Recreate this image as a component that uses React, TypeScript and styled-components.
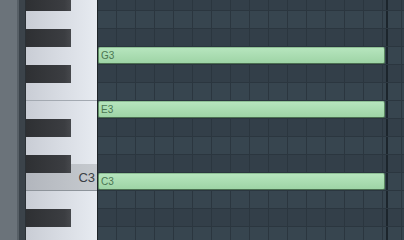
import styled, {createGlobalStyle} from 'styled-components';

const GlobalStyle = createGlobalStyle`
  html, body {
    margin: 0;
    padding: 0;
    background: #37454f;
  }
  body {
    font-family: "Liberation Sans", Arial, sans-serif;
  }
`;

const Frame = styled.div`
  display: flex;
  width: 404px;
  height: 240px;
  overflow: hidden;
`;

const Gutter = styled.div`
  flex: none;
  width: 17px;
  background: #6b737a;
  border-right: 2px solid #575f66;
`;

const Rail = styled.div`
  flex: none;
  width: 6px;
  background: #3b434a;
  border-right: 1px solid #2b3136;
`;

const Keyboard = styled.div`
  position: relative;
  flex: none;
  width: 71px;
  display: flex;
  flex-direction: column;
  border-right: 1px solid #1e2428;
  overflow: hidden;
`;

const WhiteKey = styled.div<{$h: number; $lit?: boolean}>`
  flex: none;
  height: ${p => p.$h}px;
  display: flex;
  align-items: center;
  justify-content: flex-end;
  padding-right: 2px;
  background: ${p =>
    p.$lit
      ? 'linear-gradient(to right, #b2b6bd, #c6cacf)'
      : 'linear-gradient(to right, #c9cdd5, #e7ebf1)'};
  font-size: 13px;
  color: #3b4045;
`;

const KeyLine = styled.div<{$dark?: boolean}>`
  flex: none;
  height: 1px;
  background: ${p => (p.$dark ? '#8d939a' : '#a3a9b1')};
`;

const BlackKey = styled.div`
  position: absolute;
  left: 0;
  width: 45px;
  height: 18px;
  background: linear-gradient(to right, #2e3033, #3b3d41 85%, #46484c);
`;

const Grid = styled.div`
  flex: 1;
  display: flex;
  flex-direction: column;
  margin-top: -7px;
`;

const Row = styled.div<{$black: boolean}>`
  flex: none;
  box-sizing: border-box;
  height: 18px;
  border-bottom: 1px solid #2b363f;
  background-color: ${p => (p.$black ? '#333f49' : '#37454f')};
  background-image:
    linear-gradient(to right, transparent 288px, #1c252c 288px, #1c252c 290px, transparent 290px),
    repeating-linear-gradient(to right, transparent 0, transparent 18px, #2b363f 18px, #2b363f 19px);
`;

const Note = styled.div`
  box-sizing: border-box;
  width: 287px;
  height: 17px;
  padding-left: 2px;
  border: 1px solid #5c8a63;
  border-top-color: #8ebf95;
  border-bottom-color: #4b6f51;
  border-radius: 2px;
  background: linear-gradient(#b6e5bd, #9ed4a6);
  font-size: 10px;
  line-height: 15px;
  color: #4a7652;
`;

const rows = [
  {name: 'A#3', black: true},
  {name: 'A3', black: false},
  {name: 'G#3', black: true},
  {name: 'G3', black: false, note: true},
  {name: 'F#3', black: true},
  {name: 'F3', black: false},
  {name: 'E3', black: false, note: true},
  {name: 'D#3', black: true},
  {name: 'D3', black: false},
  {name: 'C#3', black: true},
  {name: 'C3', black: false, note: true},
  {name: 'B2', black: false},
  {name: 'A#2', black: true},
  {name: 'A2', black: false},
];

const blackTops = [-7, 29, 65, 119, 155, 209];

export default function App() {
  return (
    <>
      <GlobalStyle />
      <Frame>
        <Gutter />
        <Rail />
        <Keyboard>
          <WhiteKey $h={100} />
          <KeyLine />
          <WhiteKey $h={63} />
          <WhiteKey $h={26} $lit={true}>
            C3
          </WhiteKey>
          <KeyLine $dark={true} />
          <WhiteKey $h={60} />
          {blackTops.map(top => (
            <BlackKey key={top} style={{top}} />
          ))}
        </Keyboard>
        <Grid>
          {rows.map(r => (
            <Row key={r.name} $black={r.black}>
              {r.note && <Note>{r.name}</Note>}
            </Row>
          ))}
        </Grid>
      </Frame>
    </>
  );
}
